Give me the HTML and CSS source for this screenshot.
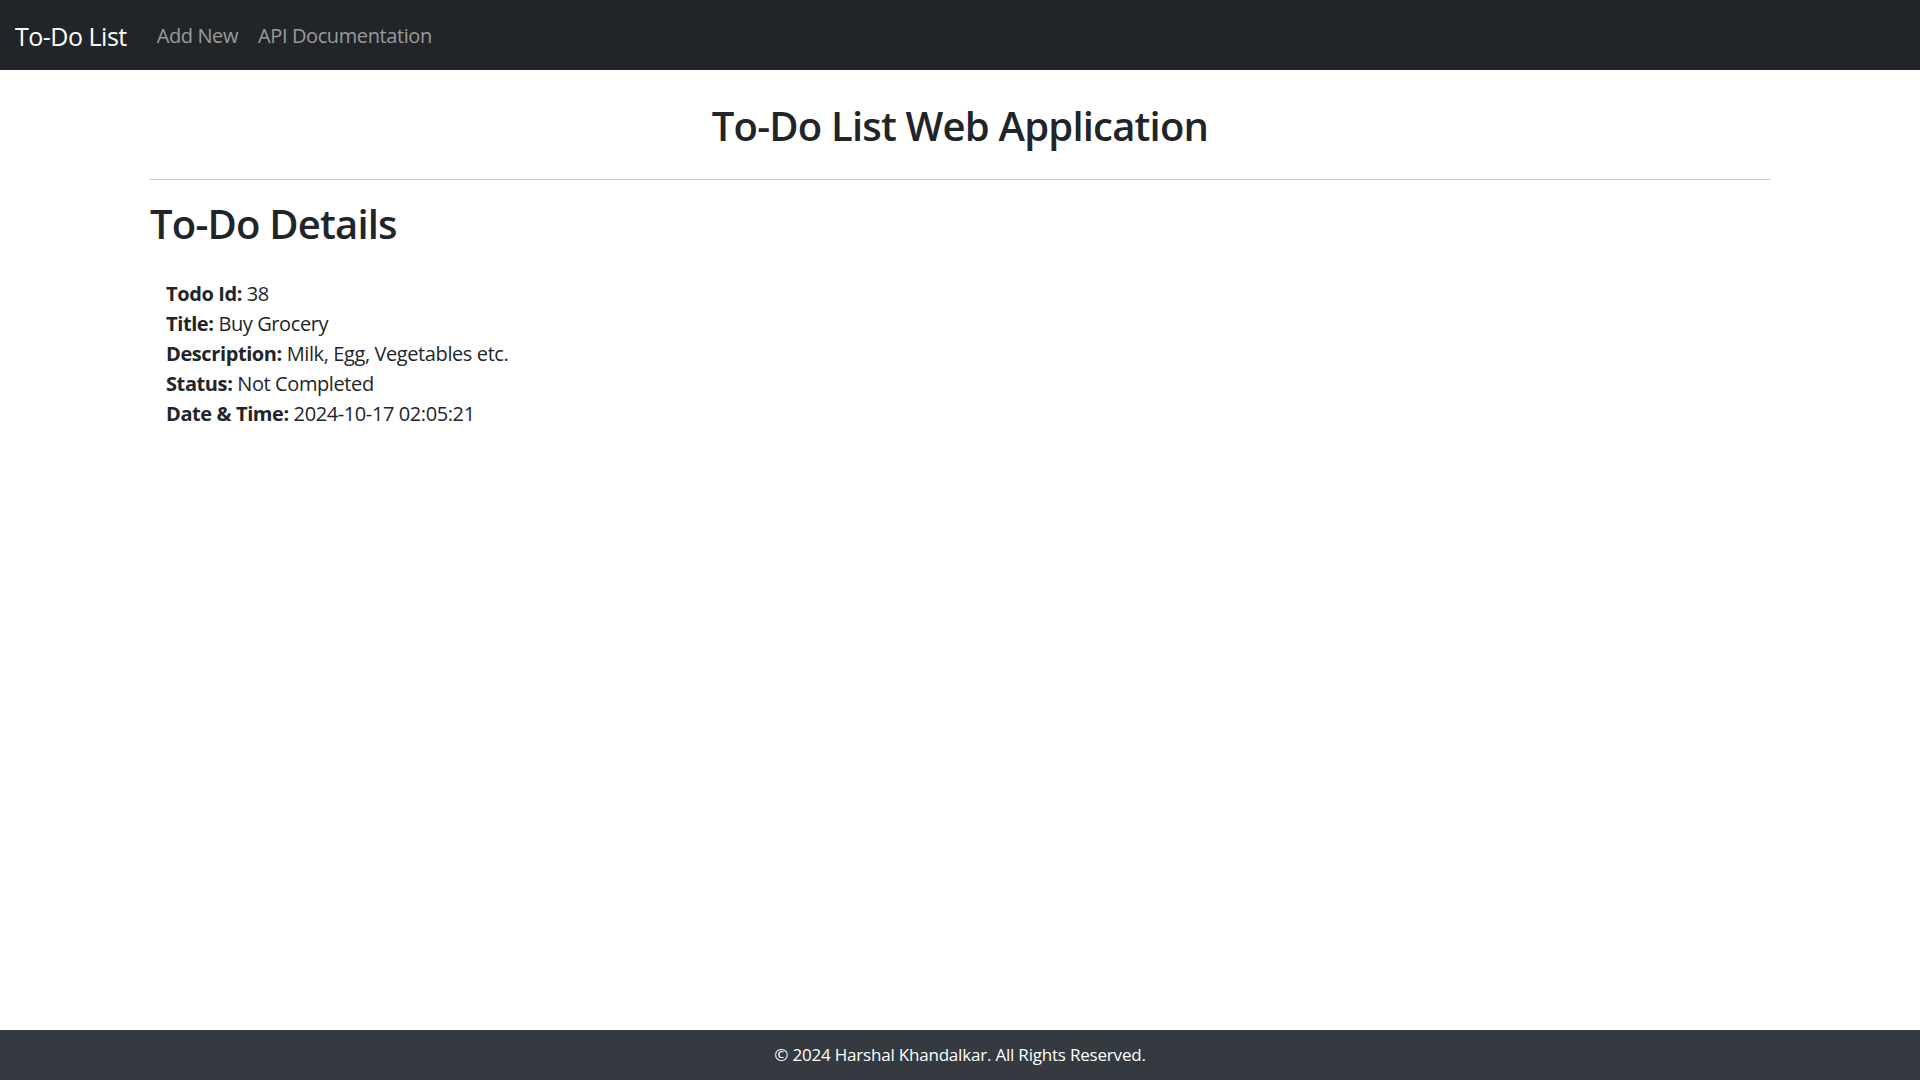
FILE: index.html
```html
<!DOCTYPE html>
<html lang="en">
<head>
<meta charset="utf-8">
<title>To-Do List</title>
<link rel="stylesheet" href="styles.css">
</head>
<body>
<nav class="navbar">
  <a class="brand" href="#">To-Do List</a>
  <ul class="nav-links">
    <li><a class="nav-link" href="#">Add New</a></li>
    <li><a class="nav-link" href="#">API Documentation</a></li>
  </ul>
</nav>
<main class="container">
  <h2 class="page-title">To-Do List Web Application</h2>
  <hr class="divider">
  <h2 class="section-title">To-Do Details</h2>
  <div class="details">
    <p><strong>Todo Id:</strong> 38</p>
    <p><strong>Title:</strong> Buy Grocery</p>
    <p><strong>Description:</strong> Milk, Egg, Vegetables etc.</p>
    <p><strong>Status:</strong> Not Completed</p>
    <p><strong>Date &amp; Time:</strong> 2024-10-17 02:05:21</p>
  </div>
</main>
<footer class="footer">© 2024 Harshal Khandalkar. All Rights Reserved.</footer>
</body>
</html>
```
FILE: styles.css
```css
* { box-sizing: border-box; }
html, body { height: 100%; }
body {
  margin: 0;
  font-family: "Segoe UI", "Open Sans", "Noto Sans", sans-serif;
  font-size: 20px;
  line-height: 30px;
  color: #212529;
  background: #fff;
  display: flex;
  flex-direction: column;
  min-height: 100vh;
}
.navbar {
  height: 70px;
  background: #212529;
  display: flex;
  align-items: center;
  padding: 2px 15px 0;
  flex-shrink: 0;
}
.brand {
  font-size: 25px;
  line-height: 37px;
  letter-spacing: -0.5px;
  color: #fff;
  text-decoration: none;
  margin-right: 20px;
}
.nav-links {
  list-style: none;
  margin: 0;
  padding: 0;
  display: flex;
}
.nav-link {
  display: block;
  padding: 10px;
  color: rgba(255,255,255,0.55);
  text-decoration: none;
  font-size: 20px;
  line-height: 30px;
  letter-spacing: -0.4px;
}
.container {
  flex: 1;
  width: 1620px;
  margin: 0 auto;
  padding-top: 32px;
}
.page-title, .section-title {
  font-size: 40px;
  line-height: 48px;
  font-weight: 600;
  letter-spacing: -0.8px;
  margin: 0 0 10px;
}
.page-title { text-align: center; }
.divider {
  border: 0;
  border-top: 1px solid #c8c9ca;
  margin: 29px 0 20px;
}
.details {
  padding: 21px 16px;
  letter-spacing: -0.4px;
}
.details p { margin: 0; }
.details strong { font-weight: 700; }
.footer {
  height: 50px;
  flex-shrink: 0;
  background: #343a40;
  color: #fff;
  font-size: 17px;
  letter-spacing: -0.2px;
  display: flex;
  align-items: center;
  justify-content: center;
}
```
